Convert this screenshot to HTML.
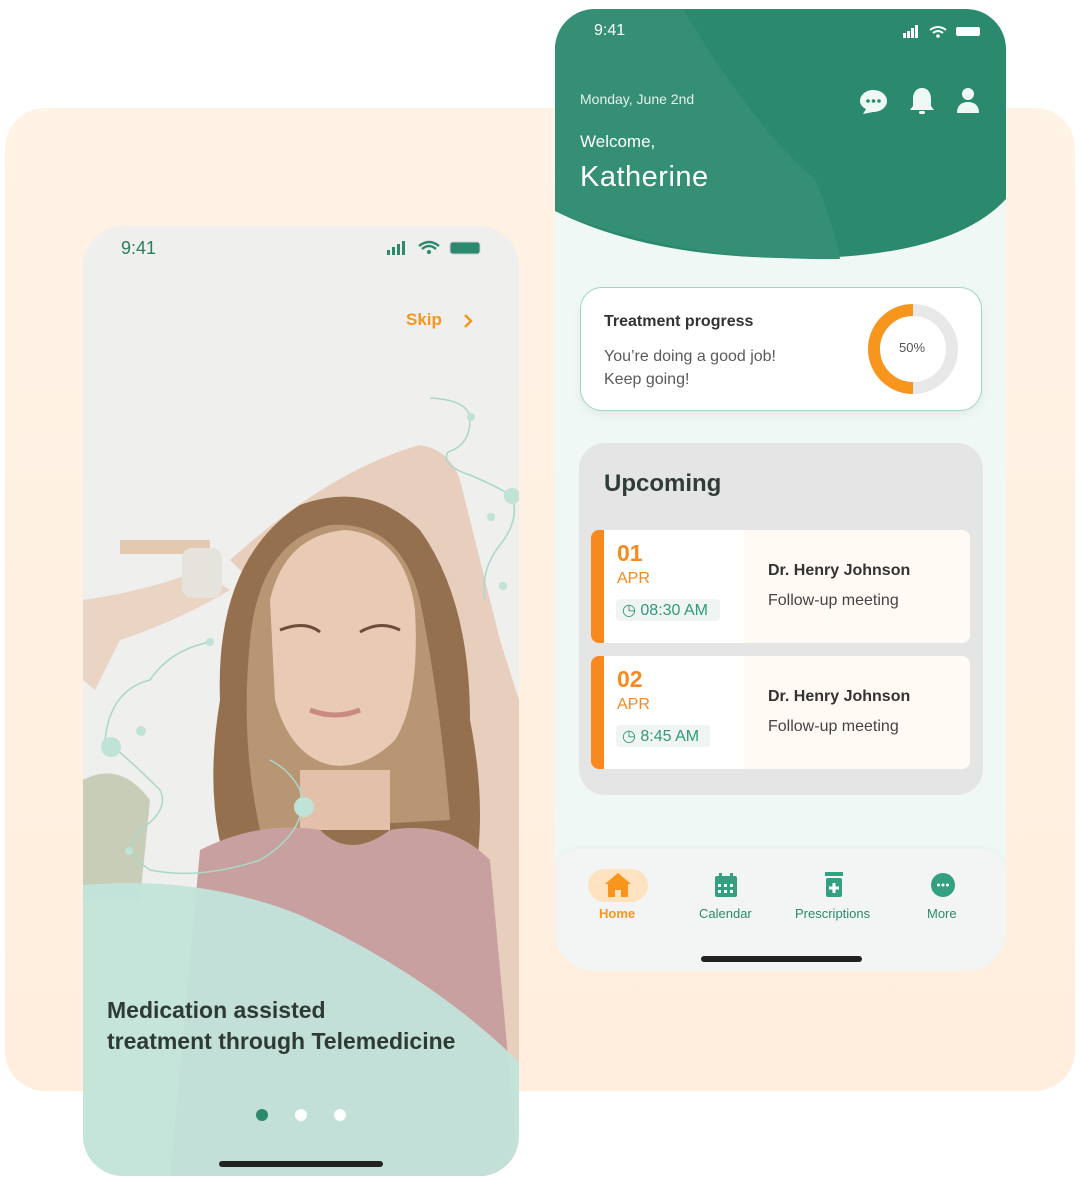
<!DOCTYPE html>
<html><head><meta charset="utf-8"><style>
*{margin:0;padding:0;box-sizing:border-box}
body{width:1081px;height:1188px;background:#fff;position:relative;overflow:hidden;font-family:"Liberation Sans",sans-serif}
.bg{position:absolute;left:5px;top:108px;width:1070px;height:983px;border-radius:40px;background:linear-gradient(180deg,#fff3e6,#ffeedd)}
.abs{position:absolute}
.p1{position:absolute;left:83px;top:226px;width:436px;height:950px;border-radius:40px;overflow:hidden;background:#eeeeec}
.p2{position:absolute;left:555px;top:9px;width:451px;height:962px;border-radius:40px;overflow:hidden;background:#f0f8f6}
.t{position:absolute;white-space:nowrap}
</style></head><body>
<div class="bg"></div>
<div class="p1">
<svg width="436" height="950" viewBox="83 226 436 950" style="position:absolute;left:0;top:0">
<rect x="83" y="226" width="436" height="950" fill="#efefed"/>
<rect x="120" y="540" width="90" height="14" fill="#e2c9b0"/>
<path d="M83 780 Q120 760 150 800 L140 900 L83 900Z" fill="#c8cdb8"/>
<path d="M230 560 Q330 470 420 445 Q450 450 460 480 Q480 560 500 640 L519 700 L519 1176 L440 1176 Q430 700 410 560 Q360 520 260 590Z" fill="#e8cfbd"/>
<path d="M83 600 Q150 590 200 570 L230 590 Q180 620 120 640 L95 690 L83 680Z" fill="#ead5c5"/>
<rect x="182" y="548" width="40" height="50" rx="10" fill="#e6e2dc"/>
<path d="M220 700 Q215 560 300 505 Q370 480 420 530 Q470 600 470 720 Q490 820 470 900 L240 900 Q200 820 220 700Z" fill="#94704f"/>
<path d="M250 640 Q260 540 330 525 Q400 520 420 600 Q440 700 450 820 L260 830 Q240 740 250 640Z" fill="#b89573"/>
<path d="M270 600 Q285 535 345 530 Q405 535 415 610 Q420 700 395 740 Q365 770 330 765 Q290 755 275 700Z" fill="#e9cbb5"/>
<path d="M280 630 Q305 620 320 632 M360 632 Q380 620 400 630" stroke="#6d4c3a" stroke-width="3" fill="none"/>
<path d="M310 710 Q335 720 360 710" stroke="#c98a82" stroke-width="5" fill="none"/>
<path d="M300 770 L300 830 L390 830 L390 770Z" fill="#e2c0aa"/>
<path d="M200 850 Q260 820 320 830 Q350 860 390 830 Q450 820 490 860 L519 1176 L170 1176Z" fill="#c9a0a0"/>
<g stroke="#a9d8c8" stroke-width="1.5" fill="none">
<path d="M430 398 Q470 400 470 420 Q470 445 448 452 Q440 465 470 475 Q505 490 512 497 Q520 520 500 545 Q480 570 485 600"/>
<path d="M210 642 Q170 650 150 680 Q110 690 105 740 Q130 760 160 790 Q170 810 140 830 Q120 850 150 870 Q200 880 260 860 Q310 830 300 790 Q290 770 270 760"/>
</g>
<g fill="#bfe3d6"><circle cx="471" cy="417" r="4"/><circle cx="512" cy="496" r="8"/><circle cx="491" cy="517" r="4"/><circle cx="503" cy="586" r="4"/><circle cx="210" cy="642" r="4"/><circle cx="111" cy="747" r="10"/><circle cx="141" cy="731" r="5"/><circle cx="304" cy="807" r="10"/><circle cx="129" cy="851" r="4"/></g>
<path d="M83 885 Q200 875 300 915 Q430 975 519 1062 L519 1176 L83 1176Z" fill="#c2e4da" opacity="0.95"/>
</svg>
<div class="t" style="left:38px;top:12px;font-size:18px;color:#2b7d62">9:41</div>
<svg class="abs" style="left:304px;top:14px" width="96" height="16"><rect x="0" y="10" width="3" height="5" fill="#2b8a6e"/><rect x="5" y="7" width="3" height="8" fill="#2b8a6e"/><rect x="10" y="4" width="3" height="11" fill="#2b8a6e"/><rect x="15" y="1" width="3" height="14" fill="#2b8a6e"/><path d="M32 6 Q42 -2 52 6 M35 9 Q42 3 49 9" stroke="#2b8a6e" stroke-width="2.5" fill="none"/><circle cx="42" cy="12" r="2" fill="#2b8a6e"/><rect x="63" y="2" width="30" height="12" rx="3" fill="#2b8a6e" stroke="#ccc"/></svg>
<div class="t" style="left:323px;top:84px;font-size:17px;font-weight:bold;color:#f5961e">Skip</div>
<svg class="abs" style="left:380px;top:87px" width="12" height="16"><path d="M2 2 L8 8 L2 14" stroke="#f5961e" stroke-width="2.5" fill="none"/></svg>
<div class="t" style="left:24px;top:769px;font-size:23px;line-height:31px;font-weight:bold;color:#2f3a35">Medication assisted<br>treatment through Telemedicine</div>
<div class="abs" style="left:173px;top:883px;width:12px;height:12px;border-radius:50%;background:#2b8a6e"></div>
<div class="abs" style="left:212px;top:883px;width:12px;height:12px;border-radius:50%;background:#fff"></div>
<div class="abs" style="left:251px;top:883px;width:12px;height:12px;border-radius:50%;background:#fff"></div>
<div class="abs" style="left:136px;top:935px;width:164px;height:6px;border-radius:3px;background:#222"></div>
</div>

<div class="p2">
<svg class="abs" style="left:0;top:0" width="451" height="260"><path d="M0 0 H451 V190 Q400 245 260 249 Q100 252 0 202Z" fill="#2b8a6e"/><path d="M0 0 H128 Q200 120 260 170 Q280 220 285 250 Q120 252 0 202Z" fill="#348f75"/></svg>
<div class="t" style="left:39px;top:13px;font-size:16px;color:#fff">9:41</div>
<svg class="abs" style="left:348px;top:16px" width="80" height="14"><rect x="0" y="8" width="3" height="5" fill="#fff"/><rect x="4" y="6" width="3" height="7" fill="#fff"/><rect x="8" y="3" width="3" height="10" fill="#fff"/><rect x="12" y="0" width="3" height="13" fill="#fff"/><path d="M27 5 Q35 -1 43 5 M30 8 Q35 4 40 8" stroke="#fff" stroke-width="2" fill="none"/><circle cx="35" cy="11" r="1.8" fill="#fff"/><rect x="53" y="2" width="24" height="9" rx="2" fill="#fff"/></svg>
<div class="t" style="left:25px;top:82px;font-size:14px;color:#e6f2ee">Monday, June 2nd</div>
<div class="t" style="left:25px;top:123px;font-size:17px;color:#fff">Welcome,</div>
<div class="t" style="left:25px;top:152px;font-size:29px;color:#fff;letter-spacing:.5px">Katherine</div>
<svg class="abs" style="left:303px;top:78px" width="125" height="28"><path d="M15 3 C23 3 29 8 29 14 C29 20 23 25 15 25 L5 27 L8 22 C4 20 2 17 2 14 C2 8 8 3 15 3Z" fill="#eef8f4"/><circle cx="10" cy="14" r="1.8" fill="#2b8a6e"/><circle cx="15.5" cy="14" r="1.8" fill="#2b8a6e"/><circle cx="21" cy="14" r="1.8" fill="#2b8a6e"/><path d="M64 1 C70 1 73 6 73 12 L73 19 L76 23 L52 23 L55 19 L55 12 C55 6 58 1 64 1Z" fill="#eef8f4"/><rect x="61" y="24" width="6" height="3" rx="1.5" fill="#eef8f4"/><circle cx="110" cy="7" r="6" fill="#eef8f4"/><path d="M99 26 C99 18 104 15 110 15 C116 15 121 18 121 26Z" fill="#eef8f4"/></svg>

<div class="abs" style="left:25px;top:278px;width:402px;height:124px;border:1.5px solid #9fd5c3;border-radius:22px;background:#fff;box-shadow:0 4px 10px rgba(0,0,0,.05)"></div>
<div class="t" style="left:49px;top:304px;font-size:16px;font-weight:bold;color:#333">Treatment progress</div>
<div class="t" style="left:49px;top:336px;font-size:16px;line-height:23px;color:#5a5a5a">You’re doing a good job!<br>Keep going!</div>
<svg class="abs" style="left:311px;top:293px" width="94" height="94"><circle cx="47" cy="47" r="39" fill="none" stroke="#e8e8e8" stroke-width="12"/><path d="M47 8 A39 39 0 0 0 47 86" fill="none" stroke="#f7951d" stroke-width="12"/></svg>
<div class="t" style="left:344px;top:331px;font-size:13px;color:#555">50%</div>

<div class="abs" style="left:24px;top:434px;width:404px;height:352px;border-radius:26px;background:#e5e5e5"></div>
<div class="t" style="left:49px;top:461px;font-size:24px;font-weight:bold;color:#2f3d37">Upcoming</div>

<div class="abs" style="left:36px;top:521px;width:379px;height:113px;border-radius:8px;overflow:hidden;background:#fffaf4"><div style="position:absolute;left:0;top:0;width:153px;height:113px;background:#fff;border-left:13px solid #f7891f"></div></div>
<div class="t" style="left:62px;top:531px;font-size:23px;font-weight:bold;color:#f7891f">01</div>
<div class="t" style="left:62px;top:561px;font-size:16px;color:#f7891f">APR</div>
<div class="abs" style="left:61px;top:590px;width:104px;height:22px;border-radius:4px;background:#f0f4f2"></div>
<div class="t" style="left:67px;top:591px;font-size:16px;color:#2f9a7b">◷ 08:30 AM</div>
<div class="t" style="left:213px;top:553px;font-size:16px;font-weight:bold;color:#333">Dr. Henry Johnson</div>
<div class="t" style="left:213px;top:583px;font-size:16px;color:#444">Follow-up meeting</div>

<div class="abs" style="left:36px;top:647px;width:379px;height:113px;border-radius:8px;overflow:hidden;background:#fffaf4"><div style="position:absolute;left:0;top:0;width:153px;height:113px;background:#fff;border-left:13px solid #f7891f"></div></div>
<div class="t" style="left:62px;top:657px;font-size:23px;font-weight:bold;color:#f7891f">02</div>
<div class="t" style="left:62px;top:687px;font-size:16px;color:#f7891f">APR</div>
<div class="abs" style="left:61px;top:716px;width:94px;height:22px;border-radius:4px;background:#f0f4f2"></div>
<div class="t" style="left:67px;top:717px;font-size:16px;color:#2f9a7b">◷ 8:45 AM</div>
<div class="t" style="left:213px;top:679px;font-size:16px;font-weight:bold;color:#333">Dr. Henry Johnson</div>
<div class="t" style="left:213px;top:709px;font-size:16px;color:#444">Follow-up meeting</div>

<div class="abs" style="left:0;top:840px;width:451px;height:122px;background:#f3f5f4;border-radius:24px 24px 0 0;box-shadow:0 -2px 6px rgba(0,0,0,.03)"></div>
<div class="abs" style="left:33px;top:860px;width:60px;height:33px;border-radius:17px;background:#ffe2c0"></div>
<svg class="abs" style="left:49px;top:863px" width="28" height="26"><path d="M14 1 L27 12 L24 12 L24 25 L17 25 L17 18 L11 18 L11 25 L4 25 L4 12 L1 12Z" fill="#f7951d"/></svg>
<div class="t" style="left:44px;top:897px;font-size:13px;font-weight:bold;color:#f7951d">Home</div>
<svg class="abs" style="left:160px;top:864px" width="22" height="25"><rect x="0" y="3" width="22" height="21" rx="2" fill="#33a07f"/><rect x="4" y="0" width="3" height="6" fill="#33a07f"/><rect x="15" y="0" width="3" height="6" fill="#33a07f"/><g fill="#fff"><rect x="3" y="11" width="3" height="3"/><rect x="9" y="11" width="3" height="3"/><rect x="15" y="11" width="3" height="3"/><rect x="3" y="17" width="3" height="3"/><rect x="9" y="17" width="3" height="3"/><rect x="15" y="17" width="3" height="3"/></g></svg>
<div class="t" style="left:144px;top:897px;font-size:13px;color:#2b8a6e">Calendar</div>
<svg class="abs" style="left:270px;top:863px" width="20" height="26"><rect x="0" y="0" width="18" height="4" fill="#33a07f"/><rect x="1" y="6" width="16" height="19" rx="2" fill="#33a07f"/><rect x="7.5" y="11" width="3" height="10" fill="#fff"/><rect x="4" y="14.5" width="10" height="3" fill="#fff"/></svg>
<div class="t" style="left:240px;top:897px;font-size:13px;color:#2b8a6e">Prescriptions</div>
<svg class="abs" style="left:376px;top:864px" width="26" height="26"><circle cx="12" cy="12" r="12" fill="#33a07f"/><circle cx="7.5" cy="12" r="1.5" fill="#fff"/><circle cx="12" cy="12" r="1.5" fill="#fff"/><circle cx="16.5" cy="12" r="1.5" fill="#fff"/></svg>
<div class="t" style="left:372px;top:897px;font-size:13px;color:#2b8a6e">More</div>
<div class="abs" style="left:146px;top:947px;width:161px;height:6px;border-radius:3px;background:#222"></div>
</div>
</body></html>
